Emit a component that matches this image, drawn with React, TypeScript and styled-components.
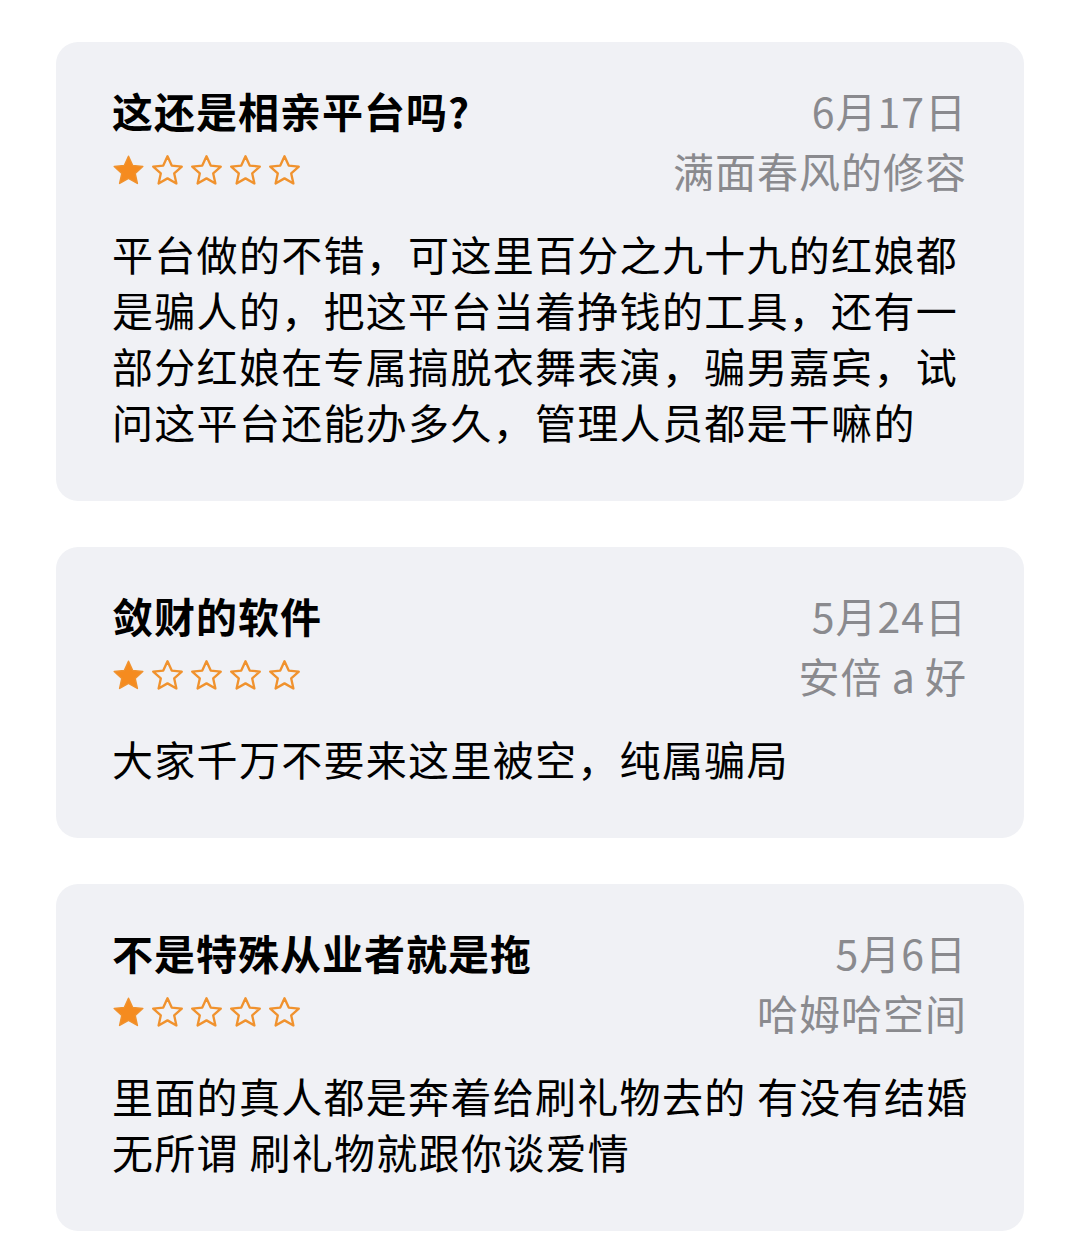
import React from 'react'
import styled, { createGlobalStyle } from 'styled-components'

const GlobalStyle = createGlobalStyle`
	body {
		margin: 0;
		background: #ffffff;
		font-family: "Noto Sans CJK SC", "Noto Sans", sans-serif;
		-webkit-font-smoothing: antialiased;
	}
`

const Page = styled.div`
	display: flex;
	flex-direction: column;
	gap: 46px;
	padding: 42px 56px 26px 56px;
`

const Card = styled.div`
	background: #f0f1f5;
	border-radius: 22px;
	padding: 38px 52px 52px 56px;
`

const Header = styled.div`
	display: flex;
	justify-content: space-between;
	align-items: flex-start;
`

const Left = styled.div`
	display: flex;
	flex-direction: column;
`

const Right = styled.div`
	display: flex;
	flex-direction: column;
	align-items: flex-end;
	padding-right: 5px;
`

const Title = styled.div`
	font-size: 41px;
	line-height: 60px;
	font-weight: 600;
	letter-spacing: 1px;
	color: #000;
`

const Meta = styled.div`
	font-size: 41px;
	line-height: 60px;
	letter-spacing: 1px;
	color: #8a8a8e;
`

const Stars = styled.div`
	display: flex;
	gap: 4px;
	height: 60px;
	align-items: center;
	margin-left: -1px;
`

const Body = styled.p`
	margin: 25px 0 0 0;
	font-size: 41px;
	line-height: 56px;
	letter-spacing: 1.3px;
	color: #000;
`

const Star = ({ filled }: { filled: boolean }) => (
	<svg width="35" height="35" viewBox="0 0 24 24">
		<polygon
			points="12,2.2 14.9,8.6 21.8,9.3 16.6,14 18.1,20.9 12,17.4 5.9,20.9 7.4,14 2.2,9.3 9.1,8.6"
			fill={filled ? '#f58b1f' : 'none'}
			stroke="#f0922e"
			strokeWidth={filled ? 1 : 1.6}
			strokeLinejoin="round"
		/>
	</svg>
)

const reviews = [
	{
		title: '这还是相亲平台吗?',
		date: '6月17日',
		author: '满面春风的修容',
		text: '平台做的不错，可这里百分之九十九的红娘都是骗人的，把这平台当着挣钱的工具，还有一部分红娘在专属搞脱衣舞表演，骗男嘉宾，试问这平台还能办多久，管理人员都是干嘛的',
	},
	{
		title: '敛财的软件',
		date: '5月24日',
		author: '安倍\u2009a\u2009好',
		text: '大家千万不要来这里被空，纯属骗局',
	},
	{
		title: '不是特殊从业者就是拖',
		date: '5月6日',
		author: '哈姆哈空间',
		text: '里面的真人都是奔着给刷礼物去的 有没有结婚无所谓 刷礼物就跟你谈爱情',
	},
]

export default function App() {
	return (
		<>
			<GlobalStyle />
			<Page>
				{reviews.map((r) => (
					<Card key={r.title}>
						<Header>
							<Left>
								<Title>{r.title}</Title>
								<Stars>
									{[0, 1, 2, 3, 4].map((i) => (
										<Star key={i} filled={i === 0} />
									))}
								</Stars>
							</Left>
							<Right>
								<Meta>{r.date}</Meta>
								<Meta>{r.author}</Meta>
							</Right>
						</Header>
						<Body>{r.text}</Body>
					</Card>
				))}
			</Page>
		</>
	)
}
